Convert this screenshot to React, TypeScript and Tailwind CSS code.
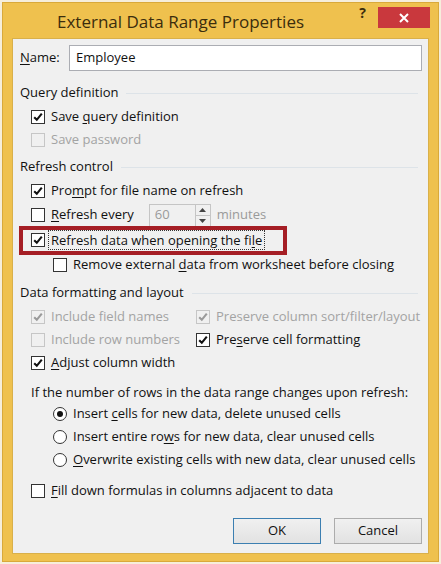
import React from "react";

const font = { fontFamily: '"Open Sans", "Noto Sans", sans-serif' };

function Check({ checked, disabled }: { checked?: boolean; disabled?: boolean }) {
  return (
    <span
      className={`inline-flex h-[14px] w-[14px] shrink-0 items-center justify-center border ${
        disabled ? "border-[#c6c6c6] bg-[#f0f0f0]" : "border-[#333333] bg-white"
      }`}
    >
      {checked && (
        <svg width="10" height="10" viewBox="0 0 10 10">
          <path
            d="M1.2 5.2 L3.8 7.8 L8.8 1.6"
            fill="none"
            stroke={disabled ? "#9a9a9a" : "#111"}
            strokeWidth="2.1"
          />
        </svg>
      )}
    </span>
  );
}

function Radio({ checked }: { checked?: boolean }) {
  return (
    <span className="inline-flex h-[14px] w-[14px] shrink-0 items-center justify-center rounded-full border border-[#333333] bg-white">
      {checked && <span className="h-[6px] w-[6px] rounded-full bg-[#111]" />}
    </span>
  );
}

function Header({ children }: { children: React.ReactNode }) {
  return (
    <div className="flex h-[24px] items-center pl-[7px] pr-[10px] text-[#111]">
      <span className="whitespace-nowrap">{children}</span>
      <span className="ml-[8px] h-px flex-1 bg-[#dde3e8]" />
    </div>
  );
}

function Row({
  h = 23,
  pl = 18,
  children,
}: {
  h?: number;
  pl?: number;
  children: React.ReactNode;
}) {
  return (
    <div className="flex items-center" style={{ height: h, paddingLeft: pl }}>
      {children}
    </div>
  );
}

function Item({
  checked,
  disabled,
  children,
}: {
  checked?: boolean;
  disabled?: boolean;
  children: React.ReactNode;
}) {
  return (
    <span className="flex items-center">
      <Check checked={checked} disabled={disabled} />
      <span
        className={`ml-[6px] whitespace-nowrap ${disabled ? "text-[#a3a3a3]" : "text-[#111]"}`}
      >
        {children}
      </span>
    </span>
  );
}

export default function App() {
  return (
    <div className="h-[564px] w-[441px] bg-[#f6eedb] p-[2px]" style={font}>
      <div className="flex h-full flex-col border border-[#d9a93a] bg-[#efc14e] px-[9px] pb-[7px]">
        {/* Title bar */}
        <div className="flex h-[35px] shrink-0 items-start">
          <div className="flex-1 pl-[45px] pt-[6px] text-[17px] leading-[26px] text-[#3b2d0d]">
            External Data Range Properties
          </div>
          <div className="mt-[0px] mr-[12px] text-[14px] font-bold leading-[20px] text-[#3b2d0d]">?</div>
          <div className="mt-[4px] mr-[-1px] flex h-[21px] w-[52px] items-center justify-center bg-[#c9383d]">
            <svg width="12" height="12" viewBox="0 0 12 12">
              <path d="M2 2 L10 10 M10 2 L2 10" stroke="#fff" strokeWidth="2" />
            </svg>
          </div>
        </div>

        {/* Content */}
        <div className="flex flex-1 flex-col border border-[#d9b04a] bg-[#f0f0f0] text-[13px]">
          {/* Name */}
          <div className="mt-[6px] flex h-[26px] items-center pl-[7px] pr-[6px]">
            <span className="w-[49px] text-[#111]">
              <span className="underline underline-offset-2">N</span>ame:
            </span>
            <div className="flex h-[26px] flex-1 items-center border border-[#abadb3] bg-white pl-[6px] text-[#111]">
              Employee
            </div>
          </div>

          <div className="h-[10px]" />
          <Header>Query definition</Header>
          <Row>
            <Item checked>
              Save <span className="underline underline-offset-2">q</span>uery definition
            </Item>
          </Row>
          <Row>
            <Item disabled>Save password</Item>
          </Row>

          <div className="h-[4px]" />
          <Header>Refresh control</Header>
          <Row h={24}>
            <Item checked>
              Pro<span className="underline underline-offset-2">m</span>pt for file name on refresh
            </Item>
          </Row>
          <Row h={24}>
            <Item>
              <span className="underline underline-offset-2">R</span>efresh every
            </Item>
            <div className="ml-[15px] flex h-[23px] w-[62px] items-stretch border border-[#c5c5c5] bg-[#f0f0f0]">
              <span className="flex flex-1 items-center pl-[5px] text-[#9a9a9a]">60</span>
              <span className="flex w-[15px] flex-col border-l border-[#c5c5c5]">
                <span className="flex flex-1 items-center justify-center border-b border-[#c5c5c5]">
                  <svg width="7" height="4" viewBox="0 0 7 4">
                    <path d="M0 4 L3.5 0 L7 4 Z" fill="#444" />
                  </svg>
                </span>
                <span className="flex flex-1 items-center justify-center">
                  <svg width="7" height="4" viewBox="0 0 7 4">
                    <path d="M0 0 L3.5 4 L7 0 Z" fill="#444" />
                  </svg>
                </span>
              </span>
            </div>
            <span className="ml-[6px] text-[#9a9a9a]">minutes</span>
          </Row>
          <div className="flex h-[26px] items-center pl-[6px]">
            <div className="flex h-[29px] w-[268px] items-center border-[4px] border-[#a51e25] pl-[8px]">
              <Check checked />
              <span className="ml-[3px] border border-dotted border-[#333] px-[2px] leading-[18px] text-[#111]">
                Refresh data when opening the fi<span className="underline underline-offset-2">l</span>e
              </span>
            </div>
          </div>
          <Row h={24} pl={40}>
            <Item>
              Remove external <span className="underline underline-offset-2">d</span>ata from worksheet before closing
            </Item>
          </Row>

          <div className="h-[4px]" />
          <Header>Data formatting and layout</Header>
          <Row>
            <span className="w-[165px]">
              <Item checked disabled>
                Include field names
              </Item>
            </span>
            <Item checked disabled>
              Preserve column sort/filter/layout
            </Item>
          </Row>
          <Row>
            <span className="w-[165px]">
              <Item disabled>Include row numbers</Item>
            </span>
            <Item checked>
              Pre<span className="underline underline-offset-2">s</span>erve cell formatting
            </Item>
          </Row>
          <Row>
            <Item checked>
              <span className="underline underline-offset-2">A</span>djust column width
            </Item>
          </Row>

          <div className="h-[9px]" />
          <div className="flex h-[19px] items-center pl-[18px] text-[#111]">
            If the number of rows in the data range changes upon refresh:
          </div>
          {[
            [true, <>Insert <span className="underline underline-offset-2">c</span>ells for new data, delete unused cells</>],
            [false, <>Insert entire ro<span className="underline underline-offset-2">w</span>s for new data, clear unused cells</>],
            [false, <><span className="underline underline-offset-2">O</span>verwrite existing cells with new data, clear unused cells</>],
          ].map(([c, label], i) => (
            <div key={i} className="flex h-[23px] items-center pl-[40px]">
              <Radio checked={c as boolean} />
              <span className="ml-[6px] whitespace-nowrap text-[#111]">{label as React.ReactNode}</span>
            </div>
          ))}

          <div className="h-[8px]" />
          <Row h={23}>
            <Item>
              <span className="underline underline-offset-2">F</span>ill down formulas in columns adjacent to data
            </Item>
          </Row>

          <div className="flex flex-1 items-center justify-end gap-[13px] pr-[6px] pt-[7px]">
            <button className="h-[26px] w-[88px] border border-[#3c7fb1] bg-gradient-to-b from-[#f0f0f0] to-[#e2e2e2] text-[#111]">
              OK
            </button>
            <button className="h-[26px] w-[88px] border border-[#acacac] bg-gradient-to-b from-[#f0f0f0] to-[#e2e2e2] text-[#111]">
              Cancel
            </button>
          </div>
        </div>
      </div>
    </div>
  );
}
